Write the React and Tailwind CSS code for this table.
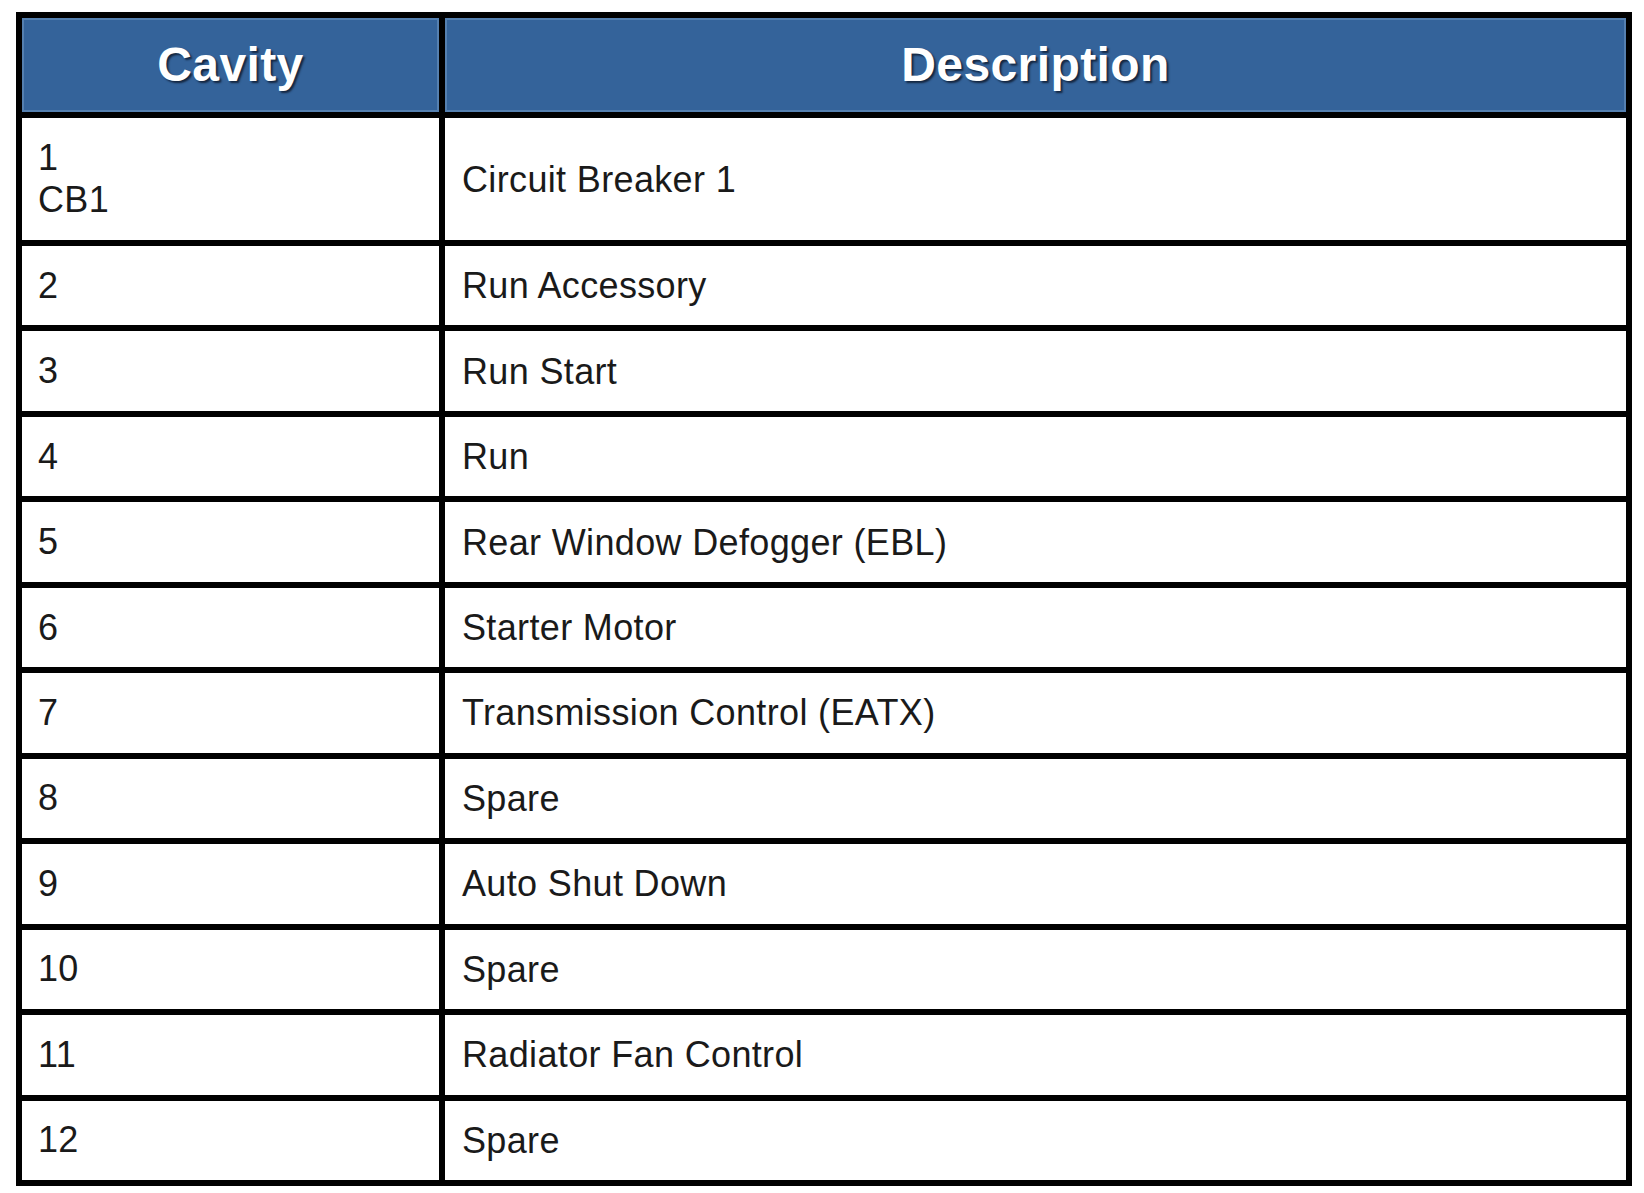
import React from 'react';

const rows = [
  { cavity: ['1', 'CB1'], description: 'Circuit Breaker 1' },
  { cavity: ['2'], description: 'Run Accessory' },
  { cavity: ['3'], description: 'Run Start' },
  { cavity: ['4'], description: 'Run' },
  { cavity: ['5'], description: 'Rear Window Defogger (EBL)' },
  { cavity: ['6'], description: 'Starter Motor' },
  { cavity: ['7'], description: 'Transmission Control (EATX)' },
  { cavity: ['8'], description: 'Spare' },
  { cavity: ['9'], description: 'Auto Shut Down' },
  { cavity: ['10'], description: 'Spare' },
  { cavity: ['11'], description: 'Radiator Fan Control' },
  { cavity: ['12'], description: 'Spare' },
];

function HeaderCell({ children }) {
  return (
    <div className="bg-[#34639a] shadow-[inset_0_0_0_2px_#5580b0] flex items-center justify-center">
      <span className="text-white font-bold text-[48px] leading-none tracking-[0.4px] [text-shadow:2px_2px_2px_#142640]">
        {children}
      </span>
    </div>
  );
}

export default function App() {
  return (
    <div className="bg-white w-[1644px] h-[1193px] pt-[12px] pl-[16px] font-['Liberation_Sans',Arial,sans-serif]">
      <div className="w-[1616px] h-[1174px] bg-black p-[6px] grid grid-cols-[417px_1fr] grid-rows-[94px_122px_repeat(11,1fr)] gap-[6px]">
        <HeaderCell>Cavity</HeaderCell>
        <HeaderCell>Description</HeaderCell>

        {rows.map((row) => (
          <React.Fragment key={row.cavity.join('-')}>
            <div className="bg-white flex flex-col justify-center pl-[16px] text-[36px] leading-[42px] tracking-[0.35px] text-[#1a1a1a]">
              {row.cavity.map((line) => (
                <span key={line}>{line}</span>
              ))}
            </div>
            <div className="bg-white flex items-center pl-[17px] text-[36px] leading-[43px] tracking-[0.35px] text-[#1a1a1a]">
              {row.description}
            </div>
          </React.Fragment>
        ))}
      </div>
    </div>
  );
}
